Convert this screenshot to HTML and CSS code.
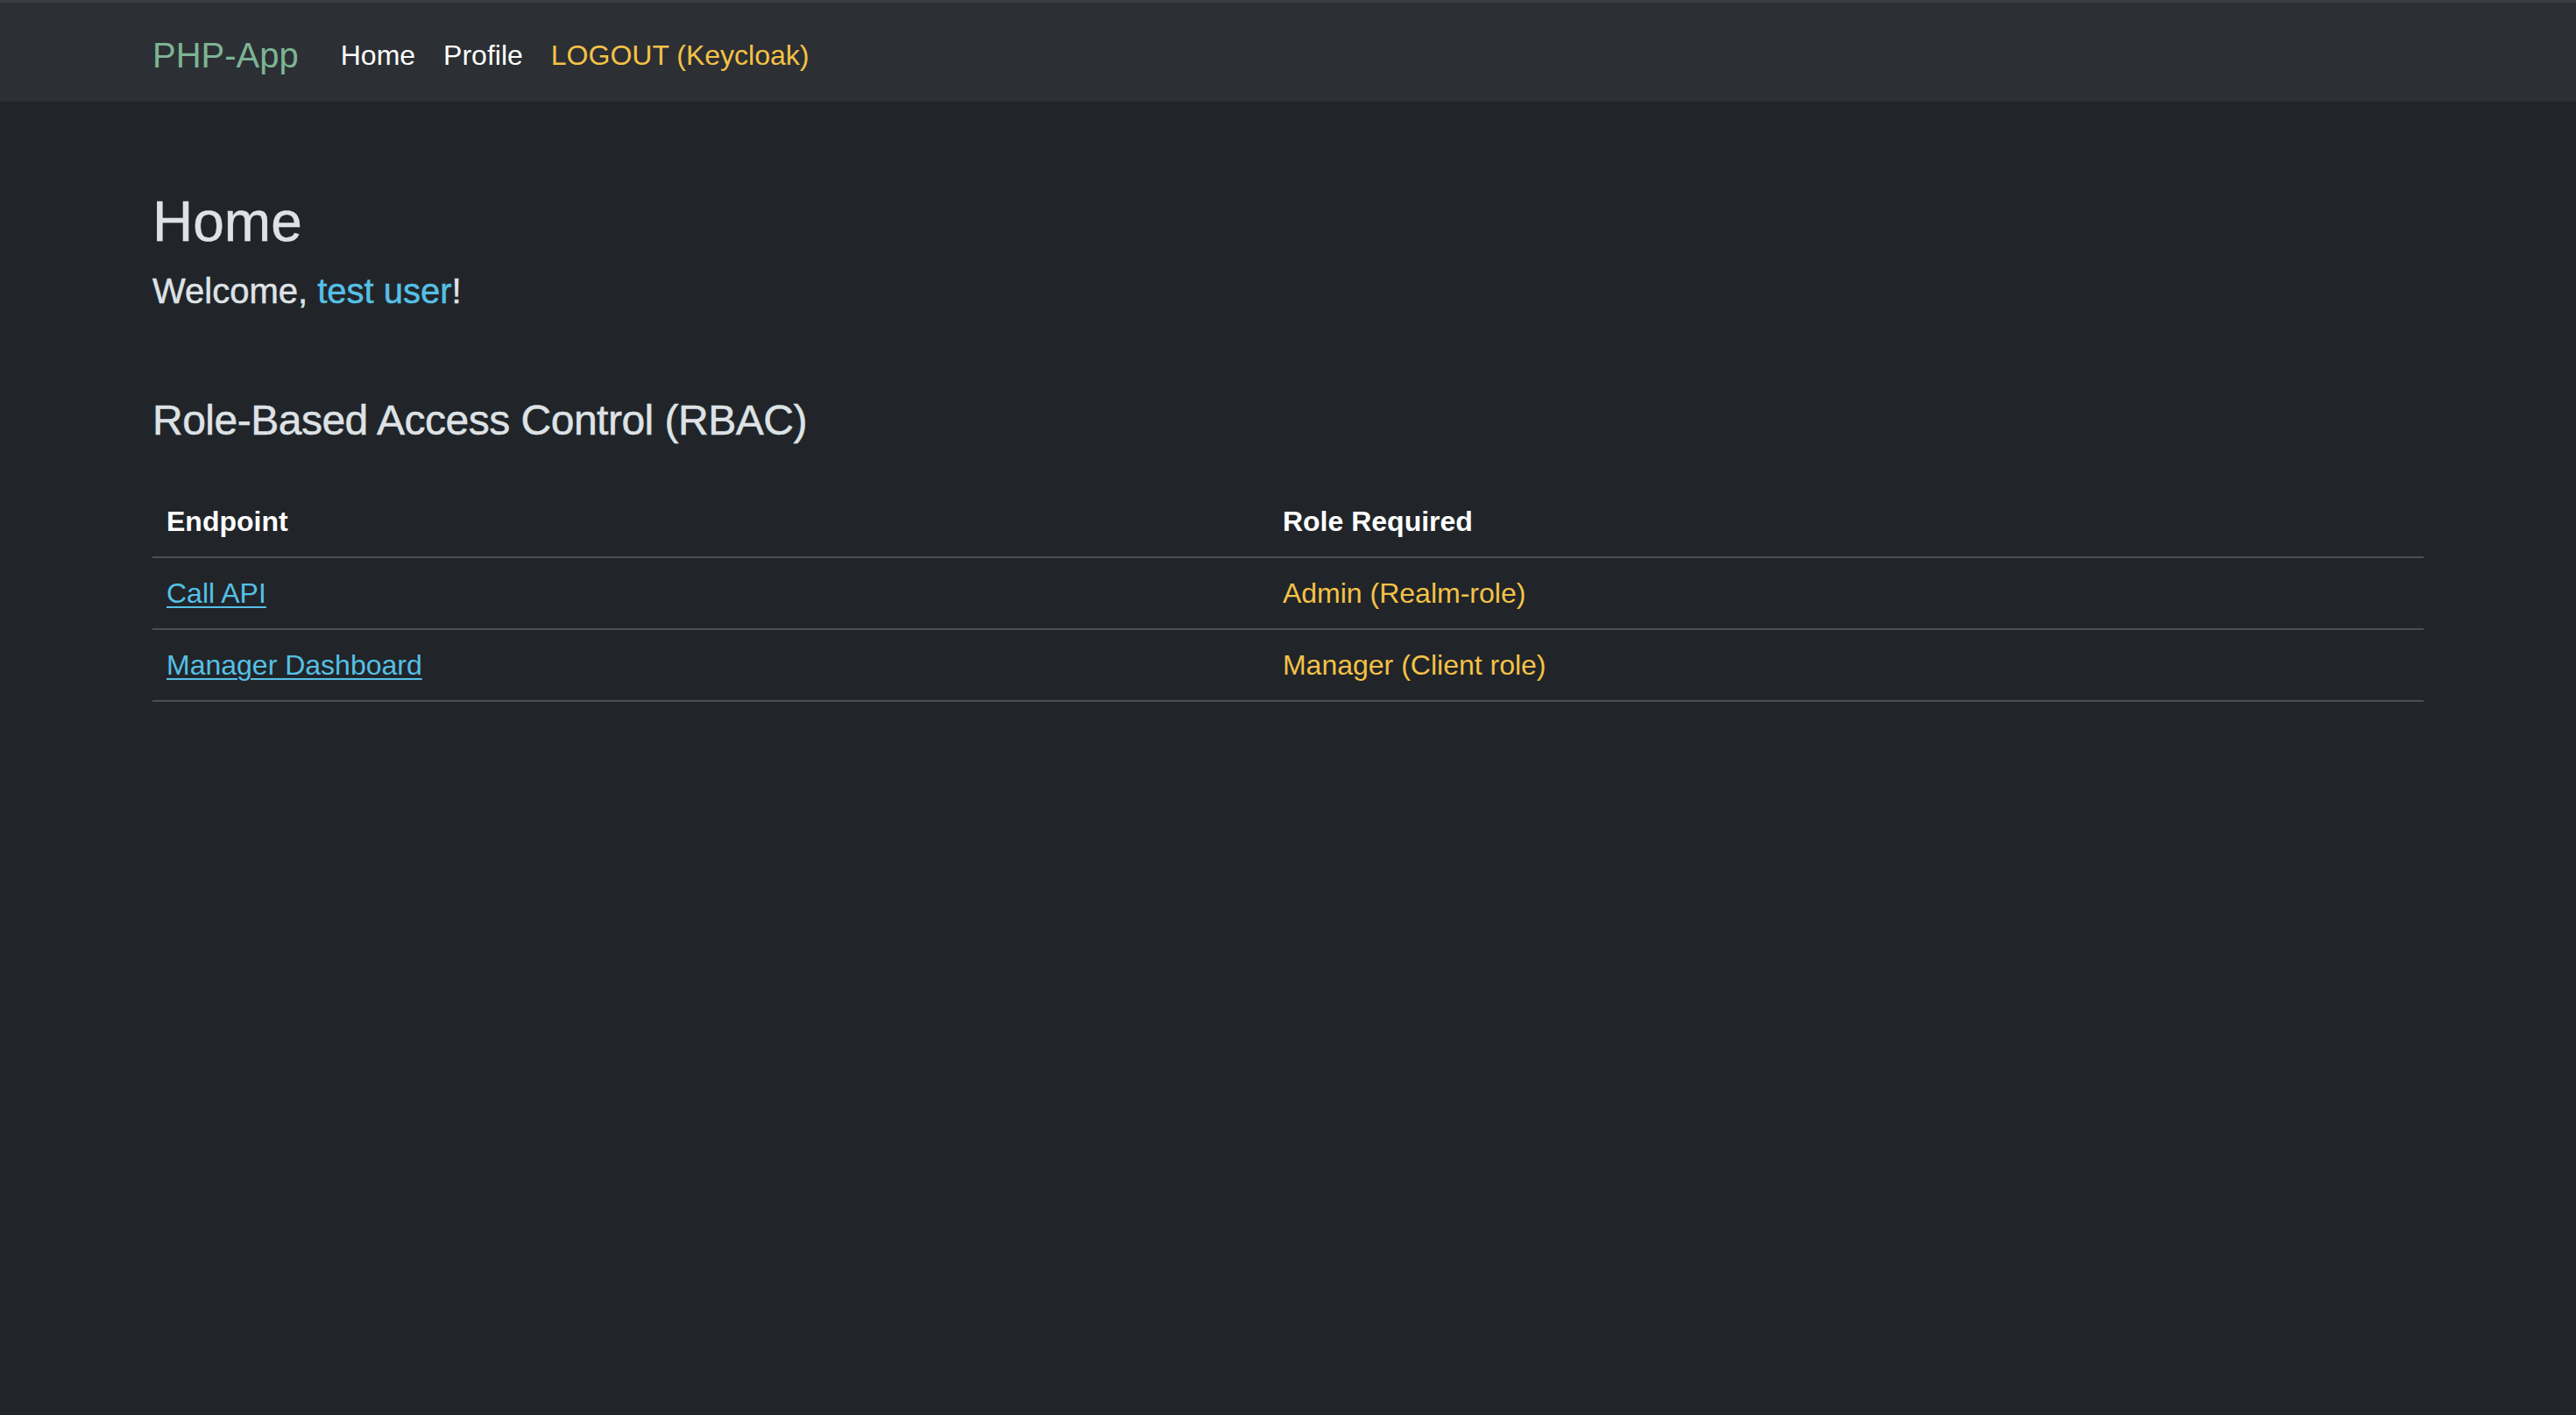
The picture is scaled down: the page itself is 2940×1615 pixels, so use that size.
FILE: index.html
```html
<!DOCTYPE html>
<html lang="en">
<head>
<meta charset="utf-8">
<title>PHP-App</title>
<link rel="stylesheet" href="styles.css">
</head>
<body>
<nav class="navbar">
  <div class="container nav-inner">
    <a class="brand" href="#">PHP-App</a>
    <ul class="nav-links">
      <li><a class="nav-link" href="#">Home</a></li>
      <li><a class="nav-link" href="#">Profile</a></li>
      <li><a class="nav-link logout" href="#">LOGOUT (Keycloak)</a></li>
    </ul>
  </div>
</nav>
<main class="container main">
  <h2 class="title">Home</h2>
  <h5 class="welcome">Welcome, <span class="user">test user</span>!</h5>
  <section class="rbac">
    <h4 class="section-title">Role-Based Access Control (RBAC)</h4>
    <table class="table">
      <thead>
        <tr><th class="col-endpoint">Endpoint</th><th>Role Required</th></tr>
      </thead>
      <tbody>
        <tr><td><a class="link" href="#">Call API</a></td><td class="role">Admin (Realm-role)</td></tr>
        <tr><td><a class="link" href="#">Manager Dashboard</a></td><td class="role">Manager (Client role)</td></tr>
      </tbody>
    </table>
  </section>
</main>
</body>
</html>
```

FILE: styles.css
```css
* { box-sizing: border-box; }
html, body { margin: 0; padding: 0; }
body {
  background: #212529;
  color: #dee2e6;
  font-family: "Liberation Sans", Arial, sans-serif;
  font-size: 32px;
  line-height: 1.5;
  min-height: 1615px;
}
.container {
  width: 100%;
  max-width: 2640px;
  padding: 0 24px;
  margin: 0 auto;
}
.navbar {
  background: #2c2f33;
  border-top: 3px solid #3c3b40;
  padding: 19px 0 13px;
  height: 116px;
}
.nav-inner {
  display: flex;
  align-items: center;
  height: 100%;
}
.brand {
  color: #7cb495;
  font-size: 40px;
  line-height: 1.5;
  text-decoration: none;
  margin-right: 32px;
}
.nav-links {
  display: flex;
  list-style: none;
  margin: 0;
  padding: 0;
}
.nav-link {
  display: block;
  padding: 0 16px;
  color: #ffffff;
  text-decoration: none;
}
.nav-link.logout { color: #f4c247; }
.main { padding-top: 99px; }
.title, .welcome, .section-title {
  font-weight: 400;
  line-height: 1.2;
  color: #dee2e6;
  -webkit-text-stroke: 0.5px #dee2e6;
}
.title {
  font-size: 64px;
  margin: 0 0 16px;
}
.welcome {
  font-size: 40px;
  margin: 0;
}
.user { color: #56c0e6; -webkit-text-stroke: 0.5px #56c0e6; }
.rbac { margin-top: 95px; }
.section-title {
  font-size: 48px;
  letter-spacing: -0.5px;
  margin: 0;
}
.table {
  width: 100%;
  border-collapse: collapse;
  margin-top: 47px;
  color: #ffffff;
}
.table th, .table td {
  text-align: left;
  padding: 16px;
  border-bottom: 2px solid #4a4f54;
  line-height: 48px;
}
.table th { font-weight: 700; }
.col-endpoint { width: 49.15%; }
.link { color: #56c0e6; text-decoration: underline; text-underline-offset: 4px; text-decoration-thickness: 2px; }
.role { color: #f4c247; }
```
